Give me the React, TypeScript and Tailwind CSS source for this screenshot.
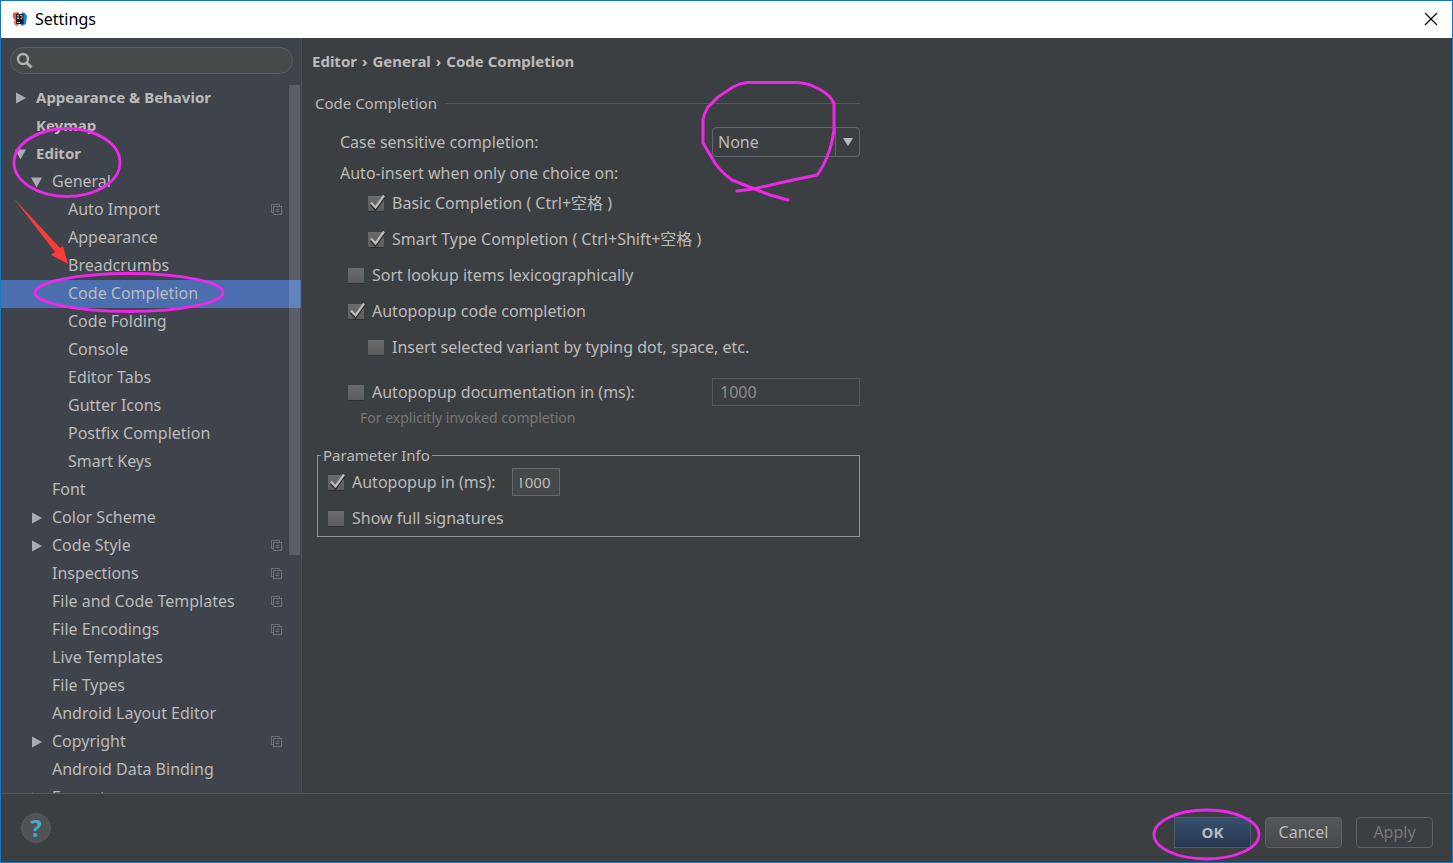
import { useState } from 'react';

interface TreeItem {
  id: string;
  label: string;
  level: 0 | 1 | 2;
  arrow?: 'open' | 'closed';
  project?: boolean;
}

const TREE: TreeItem[] = [
  { id: 'appearance-behavior', label: 'Appearance & Behavior', level: 0, arrow: 'closed' },
  { id: 'keymap', label: 'Keymap', level: 0 },
  { id: 'editor', label: 'Editor', level: 0, arrow: 'open' },
  { id: 'general', label: 'General', level: 1, arrow: 'open' },
  { id: 'auto-import', label: 'Auto Import', level: 2, project: true },
  { id: 'appearance', label: 'Appearance', level: 2 },
  { id: 'breadcrumbs', label: 'Breadcrumbs', level: 2 },
  { id: 'code-completion', label: 'Code Completion', level: 2 },
  { id: 'code-folding', label: 'Code Folding', level: 2 },
  { id: 'console', label: 'Console', level: 2 },
  { id: 'editor-tabs', label: 'Editor Tabs', level: 2 },
  { id: 'gutter-icons', label: 'Gutter Icons', level: 2 },
  { id: 'postfix', label: 'Postfix Completion', level: 2 },
  { id: 'smart-keys', label: 'Smart Keys', level: 2 },
  { id: 'font', label: 'Font', level: 1 },
  { id: 'color-scheme', label: 'Color Scheme', level: 1, arrow: 'closed' },
  { id: 'code-style', label: 'Code Style', level: 1, arrow: 'closed', project: true },
  { id: 'inspections', label: 'Inspections', level: 1, project: true },
  { id: 'templates', label: 'File and Code Templates', level: 1, project: true },
  { id: 'encodings', label: 'File Encodings', level: 1, project: true },
  { id: 'live-templates', label: 'Live Templates', level: 1 },
  { id: 'file-types', label: 'File Types', level: 1 },
  { id: 'android-layout', label: 'Android Layout Editor', level: 1 },
  { id: 'copyright', label: 'Copyright', level: 1, arrow: 'closed', project: true },
  { id: 'data-binding', label: 'Android Data Binding', level: 1 },
  { id: 'emmet', label: 'Emmet', level: 1, arrow: 'closed' },
];

const INDENT = {
  0: 'pl-[11px] text-[15px] font-bold',
  1: 'pl-[27px]',
  2: 'pl-[43px]',
};

const AppLogo = () => (
  <svg viewBox="0 0 16 16" className="h-4 w-4">
    <path d="M1 2l5-1 4 5-4 9-4-2 1-4-2-2z" fill="#e8524a" />
    <path d="M10 1l3 1 2 3-1 8-4 2-3-3z" fill="#1f7fe0" />
    <path d="M1 11l3 4 3-2-3-4z" fill="#f0806a" />
    <rect x="4" y="3" width="7.500" height="10" fill="#1c1c22" />
    <path d="M5 4.500h2M6 4.500v3M5 7.500h2M8 4.500h2v2.500q0 .8-1.500.6M5 11.500h3" stroke="#aaa" fill="none" />
  </svg>
);

const ProjectIcon = () => (
  <svg viewBox="0 0 12 12" className="h-3 w-3 shrink-0" fill="none" stroke="#6c7077">
    <path d="M2.500 8.500h-2v-8h8v2" />
    <rect x="2.500" y="2.500" width="8" height="8" />
    <path d="M4.500 5.500h4M4.500 7.500h4" />
  </svg>
);

const TreeArrow = ({ state }: { state?: 'open' | 'closed' }) => (
  <svg viewBox="0 0 16 16" className="h-4 w-4 shrink-0" fill="#a9acb1">
    {state === 'closed' && <path d="M4 2.500v11l10-5.500z" />}
    {state === 'open' && <path d="M3 3.500h11l-5.500 10z" />}
  </svg>
);

interface CheckProps {
  label: string;
  checked?: boolean;
}

const Check = ({ label, checked }: CheckProps) => (
  <label className="flex h-7 items-center gap-2">
    <span className="relative mt-0.5 flex h-4 w-4">
      <input
        type="checkbox"
        defaultChecked={checked}
        className="peer h-4 w-4 appearance-none border-b border-[#2f3132] bg-linear-to-b from-[#6b6b6b] to-[#5c5c5c]"
      />
      <svg viewBox="0 0 18 18" className="pointer-events-none absolute -top-0.5 left-0 hidden h-[18px] w-[18px] peer-checked:block" fill="none">
        <path d="M3 9.500l4.500 5L16 2.500" stroke="#2b2b2b" strokeWidth="2.500" transform="translate(0 1)" />
        <path d="M3 8.500l4.500 5L16 1.500" stroke="#bdbdbd" strokeWidth="2.200" />
      </svg>
    </span>
    <span>{label}</span>
  </label>
);

const Sidebar = () => {
  const [selected, setSelected] = useState('code-completion');

  return (
    <aside className="relative flex w-[301px] shrink-0 flex-col overflow-hidden border-r border-[#4b4f55] bg-[#3f434b]">
      <label className="mt-[9px] mr-2 mb-2.5 ml-[9px] flex h-[27px] shrink-0 items-center rounded-full border border-[#5c5f62] bg-[#45494a] px-1">
        <svg viewBox="0 0 18 18" className="h-[18px] w-[18px]" fill="none" stroke="#afb1b3">
          <circle cx="8" cy="7" r="5" strokeWidth="2.400" />
          <path d="M11.500 10.500l5 5" strokeWidth="3" />
        </svg>
        <input type="text" aria-label="Search settings" className="min-w-0 flex-1 bg-transparent px-1 outline-none" />
      </label>
      <ul className="min-h-0 flex-1 overflow-hidden">
        {TREE.map((item) => (
          <li key={item.id}>
            <button
              onClick={() => setSelected(item.id)}
              className={`flex h-7 w-full items-center gap-2 pr-[18px] text-left ${INDENT[item.level]} ${
                selected === item.id ? 'bg-[#4b6eaf]' : ''
              }`}
            >
              <TreeArrow state={item.arrow} />
              <span className="flex-1 pb-0.5 whitespace-nowrap">{item.label}</span>
              {item.project && <ProjectIcon />}
            </button>
          </li>
        ))}
      </ul>
      <div className="absolute top-[47px] right-px h-[470px] w-[11px] bg-white/15" />

      {/* Hand-drawn marks over the tree */}
      <svg className="pointer-events-none absolute top-0 left-0 h-[300px] w-[240px]" viewBox="1 38 240 300" fill="none">
        <ellipse cx="67" cy="162.500" rx="53" ry="34" stroke="#ed28e8" strokeWidth="2.800" />
        <ellipse cx="129" cy="292.500" rx="94" ry="19" stroke="#ed28e8" strokeWidth="2.800" />
        <path d="M13.500 198L60 248l3-2 5 18-17-9 4-3z" fill="#fb3b38" />
      </svg>
    </aside>
  );
};

const CompletionPanel = () => (
  <main className="min-w-0 flex-1 px-2.5 pt-[11px]">
    <h1 className="flex h-6 items-center gap-[5px] text-[15px] font-bold">
      <span>Editor</span>
      <span>›</span>
      <span>General</span>
      <span>›</span>
      <span>Code Completion</span>
    </h1>

    <section className="relative mt-[18px] ml-[3px] max-w-[545px]">
      <div className="flex h-6 items-center gap-2">
        <h2 className="text-[15px]">Code Completion</h2>
        <div className="h-px flex-1 bg-[#55585a]" />
      </div>

      <div className="mt-3 flex items-center justify-between pl-[25px]">
        <label htmlFor="case">Case sensitive completion:</label>
        <div className="relative">
          <select
            id="case"
            className="block h-[30px] w-[148px] appearance-none rounded-sm border border-[#646769] bg-[#3c3f41] pl-[5px] outline-none"
          >
            <option>None</option>
            <option>All</option>
            <option>First letter</option>
          </select>
          <span className="pointer-events-none absolute inset-y-0 right-0 flex w-[25px] items-center justify-center border-l border-[#646769]">
            <svg viewBox="0 0 12 10" className="h-2.5 w-3" fill="#bbbbbb">
              <path d="M1 1h10L6 9z" />
            </svg>
          </span>
        </div>
      </div>

      <p className="flex h-8 items-center pl-[25px]">Auto-insert when only one choice on:</p>
      <div className="flex flex-col gap-2">
        <div className="flex flex-col gap-2 pl-[53px]">
          <Check label="Basic Completion ( Ctrl+空格 )" checked />
          <Check label="Smart Type Completion ( Ctrl+Shift+空格 )" checked />
        </div>
        <div className="flex flex-col gap-2 pl-[33px]">
          <Check label="Sort lookup items lexicographically" />
          <Check label="Autopopup code completion" checked />
        </div>
        <div className="pl-[53px]">
          <Check label="Insert selected variant by typing dot, space, etc." />
        </div>
      </div>

      <div className="mt-[17px] flex items-center justify-between pl-[33px]">
        <Check label="Autopopup documentation in (ms):" />
        <input
          type="text"
          aria-label="Documentation delay"
          defaultValue="1000"
          disabled
          className="h-7 w-[148px] border border-[#55585a] bg-transparent px-[7px] text-[#8c8c8c]"
        />
      </div>
      <p className="flex h-6 items-center pl-[45px] text-sm text-[#777777]">For explicitly invoked completion</p>

      <fieldset className="mt-[13px] ml-0.5 border border-[#919394] px-2.5 pt-px pb-1">
        <legend className="-ml-[7px] h-6 px-0.5 text-[15px] leading-6">Parameter Info</legend>
        <div className="flex items-center gap-4">
          <Check label="Autopopup in (ms):" checked />
          <input
            type="text"
            dir="rtl"
            aria-label="Parameter info delay"
            defaultValue="1000"
            className="h-7 w-12 border border-[#646769] bg-[#45494a] pr-2 pl-[7px] text-[15px] outline-none"
          />
        </div>
        <div className="mt-2">
          <Check label="Show full signatures" />
        </div>
      </fieldset>

      {/* Scribble round the drop-down */}
      <svg className="pointer-events-none absolute -top-3 right-0 h-[130px] w-[170px]" viewBox="690 79 170 130" fill="none">
        <path
          d="M788 200L770 195 732 180Q722 173 715 163L703 143V120Q704 113 708 107L718 97 733 87Q740 83 747 82.500H797Q807 83 815 87 824 91 830 97L834 103V130Q832 145 827 157 822 169 817 175L793 180 753 189 737 191"
          stroke="#ed28e8"
          strokeWidth="3"
          strokeLinecap="round"
          strokeLinejoin="round"
        />
      </svg>
    </section>
  </main>
);

const Footer = () => (
  <footer className="flex h-[69px] shrink-0 items-center justify-between border-t border-[#55585a] pr-[19px] pl-5">
    <button
      aria-label="Help"
      className="flex h-[30px] w-[30px] items-center justify-center rounded-full border border-[#5a5d5f] bg-[#4f5355] text-2xl font-bold text-[#4aa5c9]"
    >
      ?
    </button>
    <div className="flex gap-3.5 pt-2">
      <div className="relative">
        <button className="h-[31px] w-[77px] border border-[#4c5c70] bg-linear-to-b from-[#37506f] to-[#26384f] text-[15px] font-bold">OK</button>
        <svg className="pointer-events-none absolute -top-2.5 -left-[22px] h-[56px] w-[110px]" viewBox="0 0 110 56" fill="none">
          <ellipse cx="54.500" cy="27.500" rx="52.500" ry="24.500" stroke="#ed28e8" strokeWidth="2.800" />
        </svg>
      </div>
      <button className="h-[31px] w-[77px] rounded-sm border border-[#5e6163] bg-linear-to-b from-[#54585a] to-[#45494b]">Cancel</button>
      <button disabled className="h-[31px] w-[77px] rounded-sm border border-[#5e6163] text-[#777777]">
        Apply
      </button>
    </div>
  </footer>
);

const App: React.FC = () => (
  <div className="flex h-screen flex-col overflow-hidden border border-[#1a76bd] bg-[#3c3f41] font-['Noto_Sans','Noto_Sans_CJK_SC',sans-serif] text-base leading-5 text-[#bbbbbb]">
    <header className="flex h-[37px] shrink-0 items-center justify-between bg-white pr-3.5 pb-0.5 pl-[11px] text-black">
      <div className="flex items-center gap-[7px]">
        <AppLogo />
        <span>Settings</span>
      </div>
      <button aria-label="Close">
        <svg viewBox="0 0 14 14" className="h-3.5 w-3.5" stroke="#000" strokeWidth="1.200">
          <path d="M1 1l12 12M13 1L1 13" />
        </svg>
      </button>
    </header>
    <div className="flex min-h-0 flex-1">
      <Sidebar />
      <CompletionPanel />
    </div>
    <Footer />
  </div>
);

export default App;
